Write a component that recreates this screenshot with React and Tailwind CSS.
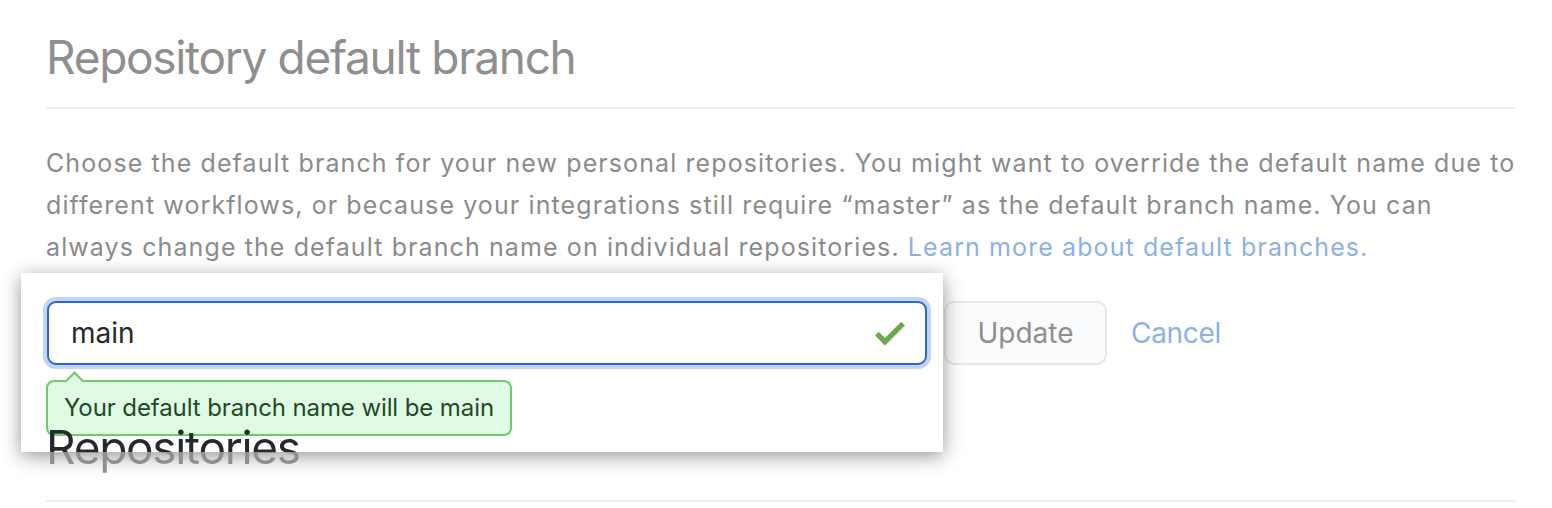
import React from 'react';

const CheckIcon = () => (
  <svg width="30" height="40" viewBox="0 0 12 16" className="fill-[#6aa84f]">
    <path fillRule="evenodd" d="M12 5l-8 8-4-4 1.5-1.5L4 10l6.5-6.5L12 5z" />
  </svg>
);

export default function App() {
  return (
    <div className="min-h-screen overflow-hidden bg-white font-['Inter',sans-serif]">
      <div className="pl-[46px] pr-[36px] pt-[29px]">
        <h2 className="border-b-2 border-[#efefef] pb-[22px] text-[46px] leading-[56px] font-normal tracking-[-1.3px] text-[#8f8f90]">
          Repository default branch
        </h2>

        <p className="mt-[33px] whitespace-nowrap text-[25px] leading-[42px] tracking-[1.1px] text-[#8b8b8c]">
          Choose the default branch for your new personal repositories. You might want to override the default name due to
          <br />
          different workflows, or because your integrations still require “master” as the default branch name. You can
          <br />
          always change the default branch name on individual repositories.{' '}
          <a href="#" className="text-[#8cb1e7]">Learn more about default branches.</a>
        </p>

        <div className="mt-[33px] flex items-center">
          <div className="relative ml-px w-[880px]">
            {/* spotlight panel */}
            <div className="absolute -left-[26px] -top-[28px] h-[179px] w-[922px] bg-white shadow-[0_4px_18px_rgba(0,0,0,0.42)]" />

            <div className="relative flex h-[64px] items-center rounded-[9px] border-2 border-[#2a66d4] bg-white pl-[22px] pr-[20px] ring-[4px] ring-[#c1d4f1]">
              <span className="flex-1 text-[28px] text-[#24292e]">main</span>
              <CheckIcon />
            </div>

            {/* tooltip */}
            <div className="absolute -left-px top-[79px] rounded-[8px] border-2 border-[#6ccb6c] bg-[#e0fbe3] pl-[16px] pr-[16px] py-[8px] text-[24px] leading-[36px] tracking-[-0.1px] text-[#1f4a26]">
              <span className="absolute -top-[8px] left-[20px] h-[13px] w-[13px] rotate-45 border-l-2 border-t-2 border-[#6ccb6c] bg-[#e0fbe3]" />
              <span className="relative">Your default branch name will be main</span>
            </div>
          </div>

          <button className="ml-[17px] h-[64px] w-[163px] rounded-[10px] border-2 border-[#e6e7e8] bg-[#fafbfc] text-[28px] text-[#8f8f8f]">
            Update
          </button>
          <a href="#" className="ml-[24px] text-[28px] tracking-[-0.3px] text-[#8cb1e7]">Cancel</a>
        </div>

        <h2 className="relative mt-[54px] border-b-2 border-[#efefef] pb-[25px] text-[46px] leading-[56px] font-normal tracking-[-1.3px]">
          <span className="bg-[linear-gradient(to_bottom,#24292e_33px,#8f8f90_33px)] bg-clip-text text-transparent">
            Repositories
          </span>
        </h2>
      </div>
    </div>
  );
}
